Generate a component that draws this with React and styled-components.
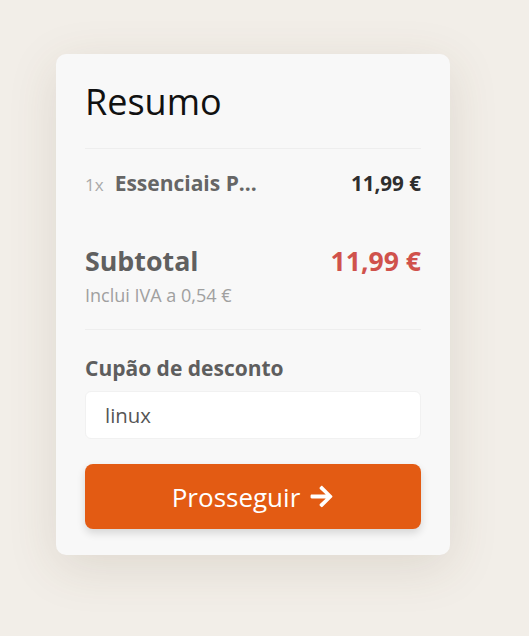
import React from "react";
import styled, { createGlobalStyle } from "styled-components";
import { FaArrowRight } from "react-icons/fa";

const Global = createGlobalStyle`
  html, body { margin: 0; padding: 0; }
  body {
    background: #f2eee8;
    font-family: "Open Sans", "Noto Sans", sans-serif;
    -webkit-font-smoothing: antialiased;
  }
  * { box-sizing: border-box; }
`;

const Page = styled.div`
  min-height: 636px;
  padding: 54px 0 0 56px;
`;

const Card = styled.section`
  width: 394px;
  background: #f8f8f8;
  border-radius: 10px;
  padding: 27px 29px 26px;
  box-shadow: 0 12px 50px rgba(90, 70, 40, 0.13);
  display: flex;
  flex-direction: column;
`;

const Title = styled.h2`
  margin: 0;
  font-size: 36px;
  line-height: 42px;
  font-weight: 400;
  color: #111;
`;

const Divider = styled.hr`
  border: 0;
  height: 1px;
  background: #eeeeee;
  margin: ${(p) => p.$top}px 0 0;
`;

const Row = styled.div`
  display: flex;
  justify-content: space-between;
  align-items: baseline;
  margin-top: ${(p) => p.$top}px;
`;

const ItemName = styled.div`
  display: flex;
  align-items: baseline;
  gap: 11px;
  font-size: 21px;
  line-height: 27px;
  font-weight: 700;
  color: #666;
`;

const Qty = styled.span`
  font-size: 17px;
  font-weight: 400;
  color: #aaa;
`;

const Price = styled.span`
  font-size: ${(p) => (p.$big ? 26.6 : 20.6)}px;
  line-height: ${(p) => (p.$big ? 34 : 27)}px;
  font-weight: 700;
  color: ${(p) => (p.$accent ? "#d0524c" : "#2e2e2e")};
`;

const SubLabel = styled.span`
  font-size: 26.8px;
  line-height: 34px;
  font-weight: 700;
  color: #606060;
`;

const Note = styled.div`
  margin-top: 5px;
  font-size: 18px;
  line-height: 24px;
  font-weight: 400;
  color: #a0a0a0;
`;

const FieldLabel = styled.label`
  margin-top: 25px;
  font-size: 21px;
  line-height: 27px;
  font-weight: 700;
  color: #5e5e5e;
`;

const Input = styled.input`
  margin-top: 9px;
  height: 48px;
  width: 100%;
  border: 1px solid #f1f1f1;
  border-radius: 6px;
  background: #fff;
  padding: 0 19px;
  font-family: inherit;
  font-size: 20.4px;
  color: #555;
  outline: none;
`;

const Button = styled.button`
  margin-top: 25px;
  height: 65px;
  width: 100%;
  border: 0;
  border-radius: 8px;
  background: #e35b13;
  color: #fff;
  font-family: inherit;
  font-size: 26px;
  font-weight: 400;
  display: flex;
  align-items: center;
  justify-content: center;
  gap: 9px;
  box-shadow: 0 4px 8px rgba(0, 0, 0, 0.14);
  cursor: pointer;
`;

export default function App() {
  return (
    <>
      <Global />
      <Page>
        <Card>
          <Title>Resumo</Title>
          <Divider $top={25} />
          <Row $top={21}>
            <ItemName>
              <Qty>1x</Qty>
              <span>Essenciais P...</span>
            </ItemName>
            <Price>11,99 €</Price>
          </Row>
          <Row $top={46}>
            <SubLabel>Subtotal</SubLabel>
            <Price $big $accent>11,99 €</Price>
          </Row>
          <Note>Inclui IVA a 0,54 €</Note>
          <Divider $top={22} />
          <FieldLabel htmlFor="coupon">Cupão de desconto</FieldLabel>
          <Input id="coupon" defaultValue="linux" />
          <Button>
            Prosseguir <FaArrowRight size={25} />
          </Button>
        </Card>
      </Page>
    </>
  );
}
